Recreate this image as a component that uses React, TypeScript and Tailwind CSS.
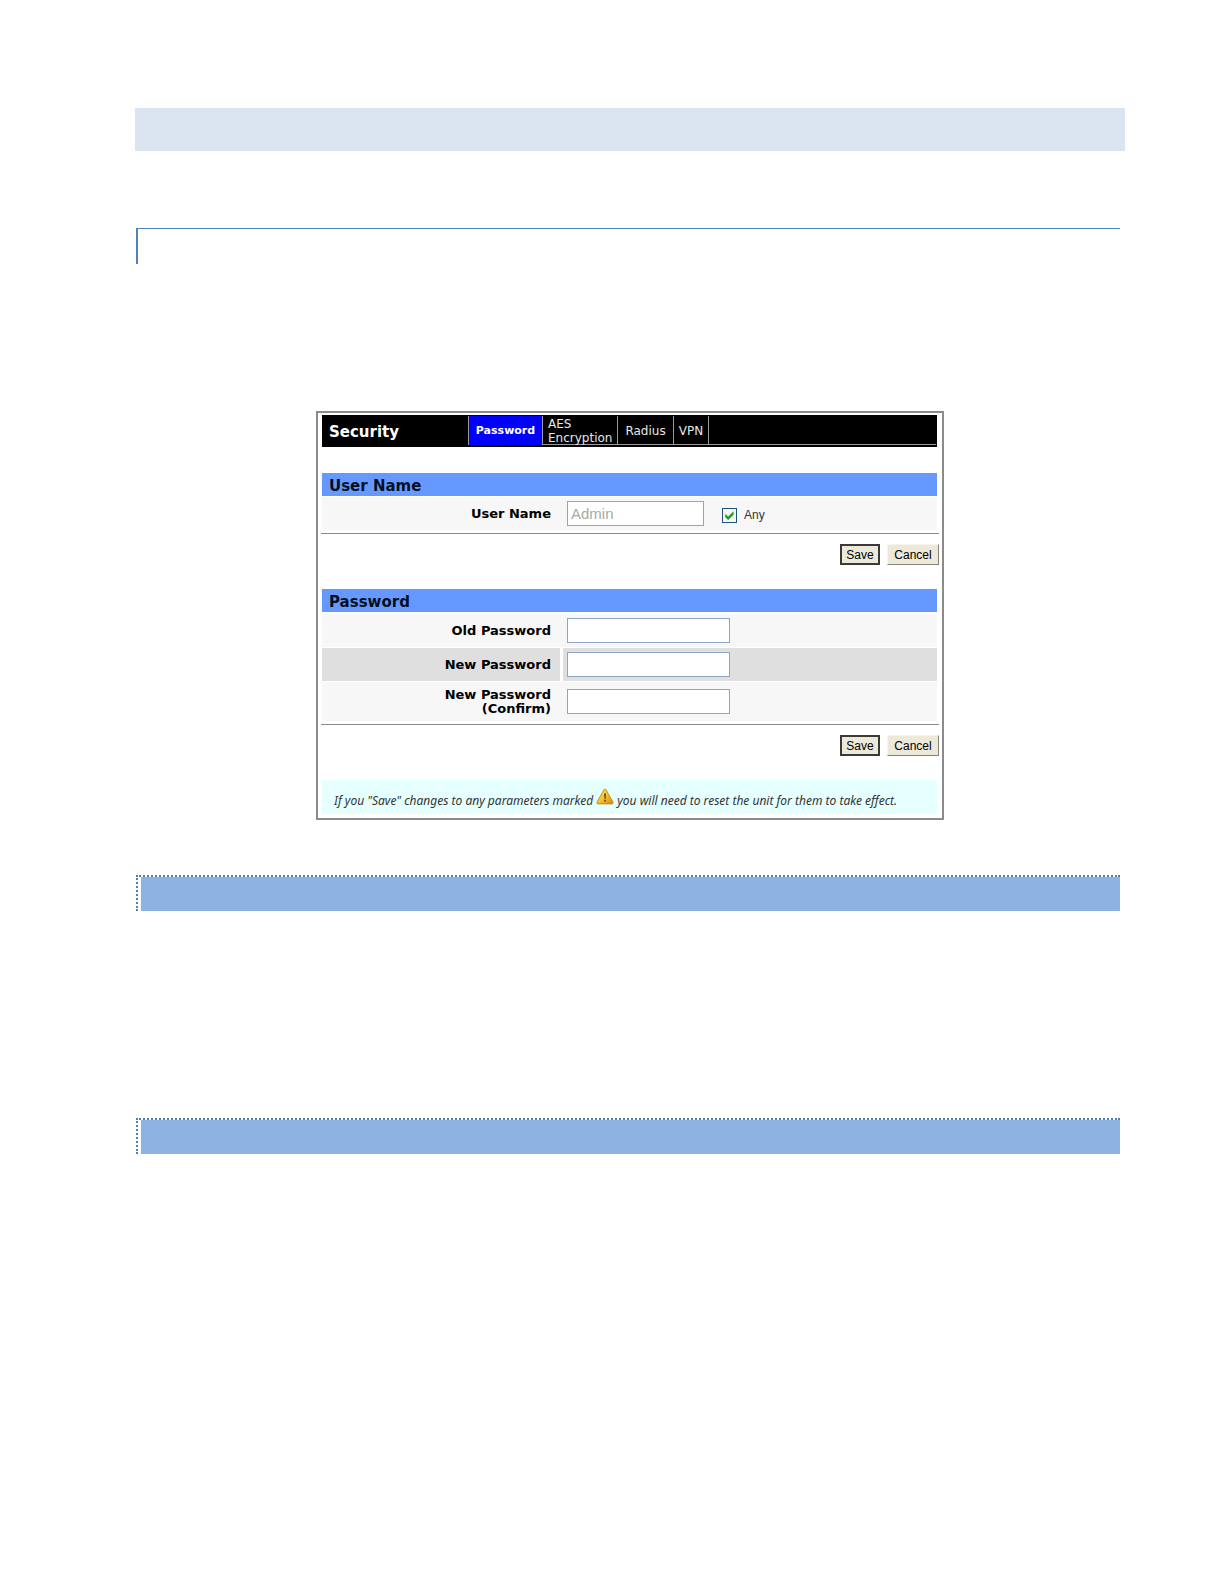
import type { ReactNode } from "react";

function SectionTitle({ children }: { children: ReactNode }) {
  return (
    <h2 className="h-[23px] border-t border-[#8c96ac] bg-[#6699ff] px-[7px] text-[15px] leading-6 font-bold text-[#05101f]">
      {children}
    </h2>
  );
}

type FieldProps = {
  id: string;
  label: ReactNode;
  shade?: "light" | "dark";
  children: ReactNode;
};

function FieldRow({ id, label, shade = "light", children }: FieldProps) {
  const dark = shade === "dark";
  return (
    <div className={dark ? "flex gap-[3px]" : "flex gap-[3px] bg-[#f7f7f7]"}>
      <label
        htmlFor={id}
        className={
          dark
            ? "flex w-[238px] shrink-0 items-center justify-end bg-[#dfdfdf] pr-[9px] text-right text-[13px] leading-[14px] font-bold text-black"
            : "flex w-[238px] shrink-0 items-center justify-end pr-[9px] text-right text-[13px] leading-[14px] font-bold text-black"
        }
      >
        <span>{label}</span>
      </label>
      <div
        className={
          dark
            ? "flex grow items-center bg-[#dfdfdf] px-1 py-1"
            : "flex grow items-center px-1 py-1"
        }
      >
        {children}
      </div>
    </div>
  );
}

function PasswordInput({ id }: { id: string }) {
  return (
    <input
      id={id}
      type="password"
      className="h-[25px] w-[163px] border border-[#8fa5c4] bg-white px-1 text-[15px] outline-none"
    />
  );
}

function Actions() {
  return (
    <div className="-mr-[2px] -ml-px flex justify-end gap-[7px] border-t border-[#8a8a8a] pt-[10px] font-['Liberation_Sans',sans-serif] text-[12px] leading-[14px] text-black">
      <button
        type="button"
        className="h-[21px] w-10 border-2 border-[#3a3a38] bg-[#ece9d8] text-center"
      >
        Save
      </button>
      <button
        type="button"
        className="h-[21px] w-[52px] border border-t-[#f6f5ec] border-r-[#85837a] border-b-[#85837a] border-l-[#f6f5ec] bg-[#ece9d8] text-center"
      >
        Cancel
      </button>
    </div>
  );
}

function WarningIcon() {
  return (
    <svg
      viewBox="0 0 18 17"
      className="mx-[3px] inline-block h-[17px] w-[18px] align-baseline"
      role="img"
      aria-label="reset required"
    >
      <defs>
        <linearGradient id="warn" x1="0" y1="0" x2="1" y2="1">
          <stop offset="0" stopColor="#ffe680" />
          <stop offset="0.5" stopColor="#f6c22c" />
          <stop offset="1" stopColor="#d18a08" />
        </linearGradient>
      </defs>
      <path
        d="M9 1 Q9.7 1 10.2 2 L17 14 Q17.6 15.8 16 15.9 L2 15.9 Q.4 15.8 1 14 L7.8 2 Q8.3 1 9 1Z"
        fill="url(#warn)"
        stroke="#b98a1c"
        strokeWidth="0.9"
      />
      <path d="M8.2 5.5h1.7l-.3 5.2h-1.1zM8.3 11.8h1.5v1.6H8.3z" fill="#4d3a0a" />
    </svg>
  );
}

function TabLink({ children, wide }: { children: ReactNode; wide?: boolean }) {
  return (
    <a
      href="#"
      className={
        wide
          ? "flex items-center border-r border-b border-[#9a9a9a] px-[7px] pt-px text-[12px] leading-[14px] text-[#e8e8e8]"
          : "flex items-center border-r border-b border-[#9a9a9a] px-[5px] pt-px text-[12px] leading-[14px] text-[#e8e8e8]"
      }
    >
      {children}
    </a>
  );
}

function DottedBand() {
  return (
    <div className="mr-[5px] ml-px h-9 border-t-2 border-l-2 border-dotted border-[#4f7fb5] pl-[3px]">
      <div className="h-full bg-[#8db3e2]" />
    </div>
  );
}

export default function App() {
  return (
    <main className="min-h-screen bg-white pt-[108px] pr-[99px] pb-10 pl-[135px] font-['DejaVu_Sans',sans-serif]">
      <div className="h-[43px] bg-[#dbe5f1]" />
      <div className="mt-[77px] mr-[5px] ml-px h-9 border-t border-l-2 border-[#4f81bd]" />

      <section className="mx-auto mt-[147px] max-w-[628px] border-2 border-[#8b8b8b] pt-[2px] pr-[5px] pb-1 pl-1">
        <nav className="flex h-8 bg-black pt-px pr-px pb-[2px]">
          <h1 className="flex w-[146px] shrink-0 items-center pt-[3px] pl-[7px] text-[15px] font-bold text-white">
            Security
          </h1>
          <a
            href="#"
            aria-current="page"
            className="flex w-[75px] shrink-0 items-center justify-center border-x border-[#9a9a9a] bg-[#0000ff] pt-px text-[11px] font-bold text-white"
          >
            Password
          </a>
          <TabLink>
            <span>
              AES
              <br />
              Encryption
            </span>
          </TabLink>
          <TabLink wide>Radius</TabLink>
          <TabLink>VPN</TabLink>
          <div className="grow border-b border-[#9a9a9a]" />
        </nav>

        <form className="mt-[26px]" onSubmit={(e) => e.preventDefault()}>
          <SectionTitle>User Name</SectionTitle>
          <div className="mt-px mb-[3px]">
            <FieldRow id="username" label="User Name">
              <input
                id="username"
                type="text"
                defaultValue="Admin"
                disabled
                className="h-[25px] w-[137px] border border-[#8fa5c4] bg-white px-[3px] font-['Liberation_Sans',sans-serif] text-[15px] text-[#aaa9a2]"
              />
              <label className="ml-[18px] flex items-center gap-[7px] pt-1 font-['Liberation_Sans',sans-serif] text-[12px] leading-[15px] text-[#333]">
                <span className="relative flex">
                  <input
                    type="checkbox"
                    defaultChecked
                    className="peer size-[15px] appearance-none border border-[#1c5180] bg-[#f4f6f2]"
                  />
                  <svg
                    viewBox="0 0 15 15"
                    className="pointer-events-none absolute inset-0 hidden size-[15px] peer-checked:block"
                  >
                    <path
                      d="M3.3 5.8 L6.2 8.4 L11.6 3.2 V6.8 L6.2 12 L3.3 9.2Z"
                      fill="#21a121"
                    />
                  </svg>
                </span>
                Any
              </label>
            </FieldRow>
          </div>
          <Actions />
        </form>

        <form className="mt-6" onSubmit={(e) => e.preventDefault()}>
          <SectionTitle>Password</SectionTitle>
          <div className="mt-[2px] mb-[3px] flex flex-col gap-px">
            <FieldRow id="old" label="Old Password">
              <PasswordInput id="old" />
            </FieldRow>
            <FieldRow id="new" label="New Password" shade="dark">
              <PasswordInput id="new" />
            </FieldRow>
            <FieldRow
              id="confirm"
              label={
                <>
                  New Password
                  <br />
                  (Confirm)
                </>
              }
            >
              <div className="flex h-[31px] items-center">
                <PasswordInput id="confirm" />
              </div>
            </FieldRow>
          </div>
          <Actions />
        </form>

        <p className="mt-6 bg-[#e6ffff] pt-2 pb-[3px] pl-3 font-['Noto_Sans',sans-serif] text-[12px] leading-[21px] whitespace-nowrap text-[#333] italic">
          If you "Save" changes to any parameters marked
          <WarningIcon />
          you will need to reset the unit for them to take effect.
        </p>
      </section>

      <div className="mt-[55px]">
        <DottedBand />
      </div>
      <div className="mt-[207px]">
        <DottedBand />
      </div>
    </main>
  );
}
